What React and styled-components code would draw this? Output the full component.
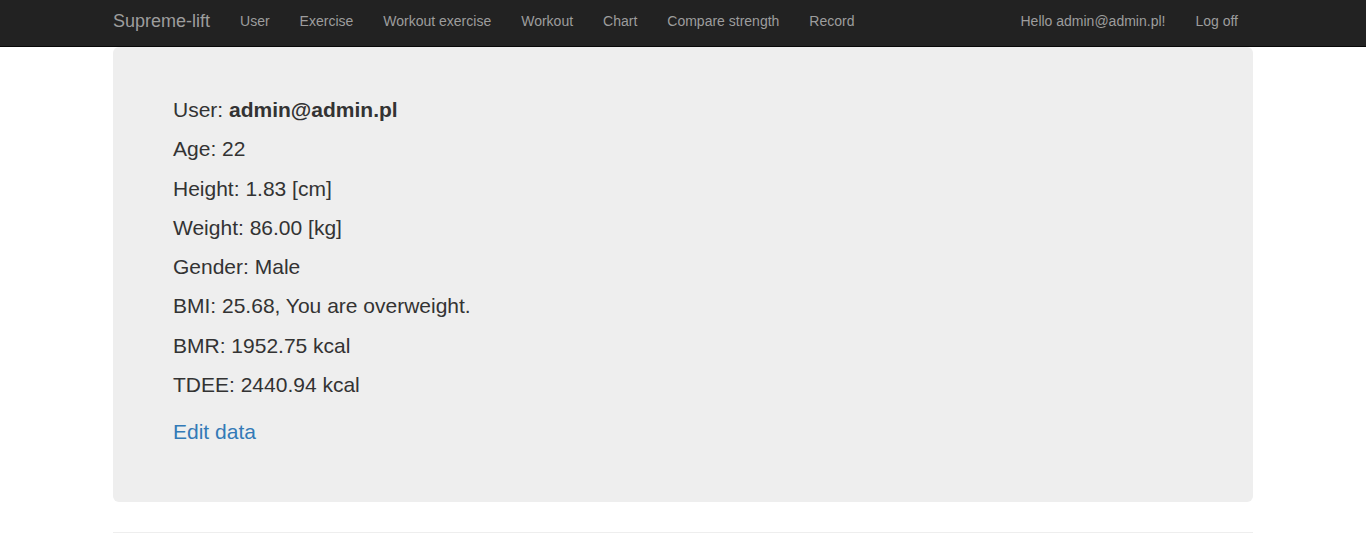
import React from 'react'
import styled, { createGlobalStyle } from 'styled-components'

const GlobalStyle = createGlobalStyle`
  html, body {
    margin: 0;
    padding: 0;
    background: #fff;
  }
  body {
    font-family: "Liberation Sans", Arial, Helvetica, sans-serif;
    font-size: 14px;
    line-height: 1.42857;
    color: #333;
  }
  * {
    box-sizing: border-box;
  }
`

const Navbar = styled.nav`
  height: 47px;
  background-color: #222;
  border-bottom: 1px solid #080808;
`

const Container = styled.div`
  width: 1170px;
  margin: 0 auto;
  padding: 0 15px;
`

const NavInner = styled(Container)`
  display: flex;
  align-items: center;
  height: 46px;
`

const Brand = styled.a`
  font-size: 18px;
  line-height: 20px;
  color: #9d9d9d;
  text-decoration: none;
  padding-right: 15px;
  margin-top: -4px;
`

const NavList = styled.ul`
  display: flex;
  list-style: none;
  margin: 0;
  padding: 0;
  margin-left: ${({ right }) => (right ? 'auto' : '0')};
`

const NavLink = styled.a`
  display: block;
  padding: 0 15px;
  font-size: 14px;
  line-height: 20px;
  color: #9d9d9d;
  text-decoration: none;
  margin-top: -4px;
`

const Jumbotron = styled.div`
  background-color: #eee;
  border-radius: 6px;
  padding: 48px 60px;
  margin-bottom: 30px;
`

const InfoRow = styled.p`
  margin: 0 0 9.3px;
  font-size: 21px;
  line-height: 30px;
`

const EditLink = styled.a`
  display: block;
  margin: 17px 0 7px;
  font-size: 21px;
  line-height: 30px;
  color: #337ab7;
  text-decoration: none;
`

const Rule = styled.hr`
  margin: 0;
  border: 0;
  border-top: 1px solid #eee;
`

const leftLinks = ['User', 'Exercise', 'Workout exercise', 'Workout', 'Chart', 'Compare strength', 'Record']

const rows = [
  ['Age', '22'],
  ['Height', '1.83 [cm]'],
  ['Weight', '86.00 [kg]'],
  ['Gender', 'Male'],
  ['BMI', '25.68, You are overweight.'],
  ['BMR', '1952.75 kcal'],
  ['TDEE', '2440.94 kcal']
]

export default function App() {
  return (
    <>
      <GlobalStyle />
      <Navbar>
        <NavInner>
          <Brand href="#">Supreme-lift</Brand>
          <NavList>
            {leftLinks.map((l) => (
              <li key={l}>
                <NavLink href="#">{l}</NavLink>
              </li>
            ))}
          </NavList>
          <NavList right>
            <li>
              <NavLink href="#">Hello admin@admin.pl!</NavLink>
            </li>
            <li>
              <NavLink href="#">Log off</NavLink>
            </li>
          </NavList>
        </NavInner>
      </Navbar>
      <Container>
        <Jumbotron>
          <InfoRow>
            User: <b>admin@admin.pl</b>
          </InfoRow>
          {rows.map(([k, v]) => (
            <InfoRow key={k}>
              {k}: {v}
            </InfoRow>
          ))}
          <EditLink href="#">Edit data</EditLink>
        </Jumbotron>
        <Rule />
      </Container>
    </>
  )
}
